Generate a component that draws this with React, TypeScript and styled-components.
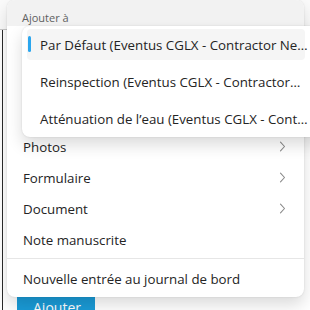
import React from "react";
import styled, { createGlobalStyle } from "styled-components";

const GlobalStyle = createGlobalStyle`
  html, body {
    margin: 0;
    padding: 0;
    background: #ffffff;
    font-family: "Open Sans", "Noto Sans", sans-serif;
  }
`;

const subItems = [
  "Par Défaut (Eventus CGLX - Contractor Ne…",
  "Reinspection (Eventus CGLX - Contractor…",
  "Atténuation de l’eau (Eventus CGLX - Cont…",
];

const mainItems = [
  { label: "Photos", more: true },
  { label: "Formulaire", more: true },
  { label: "Document", more: true },
  { label: "Note manuscrite", more: false },
];

function Chevron() {
  return (
    <svg width="7" height="11" viewBox="0 0 7 11">
      <path d="M1.5 1.2 L5.5 5.5 L1.5 9.8" fill="none" stroke="#8a8a8a" strokeWidth="1.1" strokeLinecap="round" strokeLinejoin="round" />
    </svg>
  );
}

function App() {
  return (
    <Page>
      <GlobalStyle />
      <Underlay>
        <TopBar />
        <Body>
          <SideRule />
          <Footer>
            <PrimaryButton>Ajouter</PrimaryButton>
          </Footer>
        </Body>
      </Underlay>

      <Menu>
        <GroupLabel>Ajouter à</GroupLabel>
        <SubMenu>
          {subItems.map((s, i) => (
            <SubItem key={s} active={i === 0}>
              {i === 0 && <Indicator />}
              <ItemText>{s}</ItemText>
            </SubItem>
          ))}
        </SubMenu>
        <List>
          {mainItems.map((it) => (
            <Row key={it.label}>
              <ItemText>{it.label}</ItemText>
              {it.more && <Chevron />}
            </Row>
          ))}
          <Divider />
          <Row>
            <ItemText>Nouvelle entrée au journal de bord</ItemText>
          </Row>
        </List>
      </Menu>
    </Page>
  );
}

const Page = styled.div`
  position: relative;
  width: 310px;
  height: 310px;
  overflow: hidden;
  background: #ffffff;
`;

const Underlay = styled.div`
  display: flex;
  flex-direction: column;
  height: 100%;
`;

const TopBar = styled.div`
  height: 29px;
  border-bottom: 1px solid #c8c8c8;
  background: #fafafa;
`;

const Body = styled.div`
  flex: 1;
  display: flex;
`;

const SideRule = styled.div`
  width: 2px;
  border-right: 1px solid #2a2a2a;
`;

const Footer = styled.div`
  flex: 1;
  display: flex;
  align-items: flex-end;
  padding-left: 14px;
`;

const PrimaryButton = styled.div`
  width: 78px;
  height: 26px;
  margin-bottom: -13px;
  background: #1a9bd7;
  color: #ffffff;
  font-size: 14px;
  line-height: 22px;
  padding-left: 16px;
  box-sizing: border-box;
`;

const Menu = styled.div`
  position: absolute;
  left: 7px;
  top: 0;
  width: 297px;
  height: 297px;
  background: #ffffff;
  border-radius: 8px;
  box-shadow: 0 8px 16px rgba(0, 0, 0, 0.14), 0 0 2px rgba(0, 0, 0, 0.12);
  display: flex;
  flex-direction: column;
`;

const GroupLabel = styled.div`
  height: 26px;
  padding: 10px 0 0 15px;
  box-sizing: border-box;
  font-size: 11px;
  color: #616161;
  background: #f2f2f2;
  border-radius: 8px 8px 0 0;
`;

const SubMenu = styled.div`
  position: absolute;
  left: 15px;
  top: 26px;
  width: 300px;
  padding: 3px 0 3px 5px;
  background: #ffffff;
  border-radius: 8px;
  box-shadow: 0 8px 16px rgba(0, 0, 0, 0.14), 0 0 2px rgba(0, 0, 0, 0.12);
  display: flex;
  flex-direction: column;
  gap: 6px;
  z-index: 2;
`;

const SubItem = styled.div<{ active?: boolean }>`
  position: relative;
  height: 31px;
  width: 278px;
  display: flex;
  align-items: center;
  padding-left: 13px;
  box-sizing: border-box;
  border-radius: 4px;
  background: ${(p) => (p.active ? "#f5f5f5" : "transparent")};
`;

const Indicator = styled.span`
  position: absolute;
  left: 1px;
  top: 7px;
  width: 3px;
  height: 16px;
  border-radius: 2px;
  background: #2ba6ee;
`;

const ItemText = styled.span`
  font-size: 13.3px;
  color: #242424;
  white-space: nowrap;
`;

const List = styled.div`
  display: flex;
  flex-direction: column;
  padding-top: 105px;
`;

const Row = styled.div`
  height: 31px;
  display: flex;
  align-items: center;
  justify-content: space-between;
  padding: 0 18px 0 16px;
`;

const Divider = styled.div`
  height: 1px;
  background: #e6e6e6;
  margin: 3px 0 4px;
`;

export default App;
